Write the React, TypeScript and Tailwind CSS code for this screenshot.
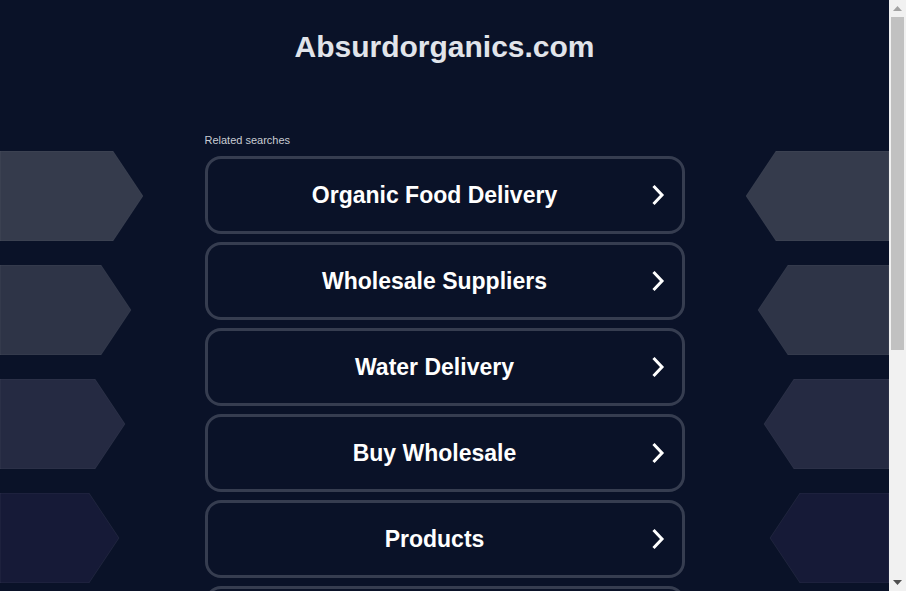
import { ReactNode } from "react";

const searches = [
  "Organic Food Delivery",
  "Wholesale Suppliers",
  "Water Delivery",
  "Buy Wholesale",
  "Products",
  "Organic Products",
];

// decorative side arrows: width of the shape, and its fill
const shapes = [
  { w: 143, fill: "#353b4c" },
  { w: 131, fill: "#2e3447" },
  { w: 125, fill: "#252a42" },
  { w: 119, fill: "#161a37" },
];

const SideShape = ({ w, fill, flip }: { w: number; fill: string; flip?: boolean }) => {
  const pts = flip
    ? `${143 - w},45 ${173 - w},0 143,0 143,90 ${173 - w},90`
    : `0,0 ${w - 30},0 ${w},45 ${w - 30},90 0,90`;
  return (
    <svg width="143" height="90" viewBox="0 0 143 90" className="block">
      <polygon points={pts} fill={fill} stroke="#ffffff10" strokeWidth="1" />
    </svg>
  );
};

const SideColumn = ({ flip }: { flip?: boolean }) => (
  <div className="w-[143px] shrink-0 pt-[151px] flex flex-col gap-[24px]">
    {shapes.map((s) => (
      <SideShape key={s.w} w={s.w} fill={s.fill} flip={flip} />
    ))}
  </div>
);

const Chevron = () => (
  <svg width="20" height="24" viewBox="0 0 20 24" fill="none" className="shrink-0">
    <polyline points="3.5,3 12,12 3.5,21" stroke="#ffffff" strokeWidth="3" strokeLinejoin="miter" />
  </svg>
);

const SearchButton = ({ children }: { children: ReactNode }) => (
  <a
    href="#"
    className="flex items-center shrink-0 h-[78px] px-[12px] rounded-[16px] border-[3px] border-[#363d50] text-white no-underline"
  >
    <span className="flex-1 text-center font-bold text-[23px] leading-[28px]">{children}</span>
    <Chevron />
  </a>
);

// classic browser scrollbar, as in the screenshot
const Scrollbar = () => (
  <div className="w-[17px] shrink-0 h-full bg-[#f1f1f1] flex flex-col">
    <div className="h-[17px] flex items-center justify-center">
      <svg width="9" height="5" viewBox="0 0 9 5">
        <polygon points="0,5 4.5,0 9,5" fill="#a3a3a3" />
      </svg>
    </div>
    <div className="flex-1 px-[2px]">
      <div className="h-[333px] bg-[#c1c1c1]" />
    </div>
    <div className="h-[17px] flex items-center justify-center">
      <svg width="9" height="5" viewBox="0 0 9 5">
        <polygon points="0,0 9,0 4.5,5" fill="#505050" />
      </svg>
    </div>
  </div>
);

export default function App() {
  return (
    <div
      className="h-screen flex overflow-hidden"
      style={{ fontFamily: '"Liberation Sans", Arial, sans-serif' }}
    >
      <div className="flex-1 h-full overflow-hidden bg-[#0a1228] flex justify-between">
        <SideColumn />
        <main className="w-[480px] shrink-0 flex flex-col pt-[29px]">
          <h1 className="text-center font-bold text-[30px] leading-[36px] text-[#e1e4ea]">
            Absurdorganics.com
          </h1>
          <p className="mt-[68px] text-[11px] leading-[14px] text-[#c9ccd3]">Related searches</p>
          <div className="mt-[9px] flex flex-col gap-[8px]">
            {searches.map((s) => (
              <SearchButton key={s}>{s}</SearchButton>
            ))}
          </div>
        </main>
        <SideColumn flip />
      </div>
      <Scrollbar />
    </div>
  );
}
